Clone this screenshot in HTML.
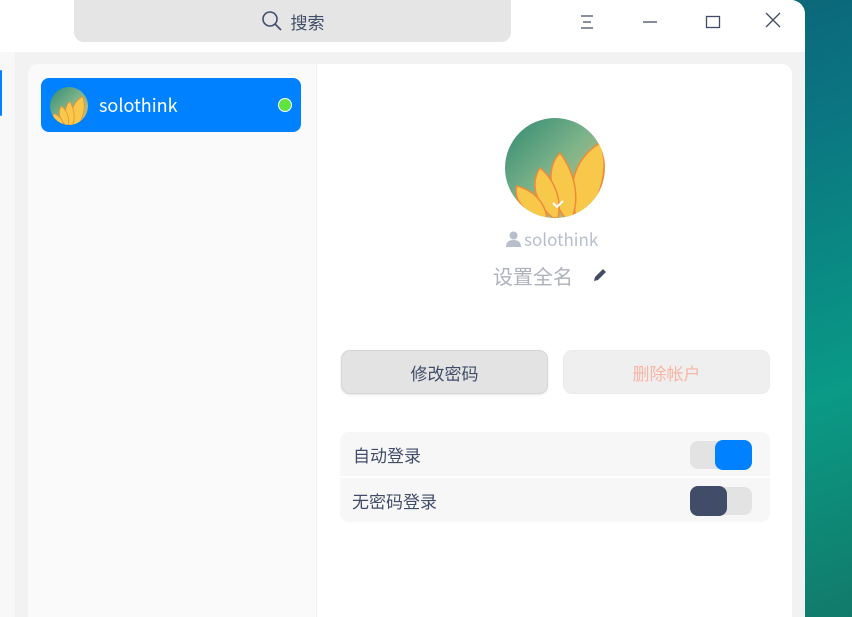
<!DOCTYPE html><html><head><meta charset="utf-8"><style>
body{margin:0;width:852px;height:617px;overflow:hidden;position:relative;font-family:"Noto Sans CJK SC","Liberation Sans",sans-serif;background:linear-gradient(160deg,#0a4a5e 0%,#0b7080 40%,#0a9a86 75%,#127a6a 100%)}
.win{position:absolute;left:0;top:0;width:805px;height:617px;background:#f2f2f2;border-top-right-radius:14px;overflow:hidden}
.hdr{position:absolute;left:0;top:0;width:805px;height:52px;background:#fff}
.search{position:absolute;left:74px;top:0;width:437px;height:42px;background:#e5e5e5;border-radius:0 0 10px 10px;font-size:17px;color:#414d68;display:flex;align-items:center;justify-content:center;gap:8px}
.lp{position:absolute;left:28px;top:64px;width:288px;height:560px;background:#fafafa;border-radius:10px 0 0 0}
.rp{position:absolute;left:317px;top:64px;width:475px;height:560px;background:#fff;border-radius:0 10px 0 0}
.item{position:absolute;left:41px;top:78px;width:260px;height:54px;background:#0081ff;border-radius:8px;color:#fff;font-size:18px}
.av{border-radius:50%;overflow:hidden;background:linear-gradient(135deg,#2f8a72,#7fb48a 50%,#d8c070)}
.btn{position:absolute;top:350px;width:205px;height:42px;border-radius:9px;font-size:17px;display:flex;align-items:center;justify-content:center}
.row{position:absolute;left:340px;width:430px;height:44px;background:#f7f7f7;font-size:17px;color:#414d68}
.sw{position:absolute;left:350px;top:9px;width:62px;height:28px;border-radius:8px;background:#e3e3e3}
.k{position:absolute;top:0;width:37px;height:30px;border-radius:8px}
</style></head><body>
<div class="win">
<div class="hdr">
<div class="search"><svg width="22" height="22" viewBox="0 0 22 22"><circle cx="9" cy="9" r="7" fill="none" stroke="#414d68" stroke-width="1.6"/><line x1="14" y1="14" x2="20" y2="20" stroke="#414d68" stroke-width="1.6"/></svg>搜索</div>
<svg style="position:absolute;left:578px;top:12px" width="20" height="20"><path d="M3 4h12M5 10h8M3 16h12" stroke="#414d68" stroke-width="1.2"/></svg>
<svg style="position:absolute;left:640px;top:12px" width="20" height="20"><path d="M3 10h14" stroke="#414d68" stroke-width="1.3"/></svg>
<svg style="position:absolute;left:703px;top:12px" width="20" height="20"><rect x="3.5" y="4.5" width="13" height="11" fill="none" stroke="#414d68" stroke-width="1.3"/></svg>
<svg style="position:absolute;left:763px;top:10px" width="20" height="20"><path d="M3 3l14 14M17 3L3 17" stroke="#414d68" stroke-width="1.3"/></svg>
</div>
<div style="position:absolute;left:0;top:52px;width:15px;height:565px;background:#f8f8f8"></div>
<div style="position:absolute;left:0;top:70px;width:2px;height:46px;background:#0081ff;border-radius:2px"></div>
<div class="lp"></div>
<div class="rp"></div>
<div class="item"><div class="av" style="position:absolute;left:9px;top:9px;width:38px;height:38px"><svg viewBox="0 0 100 100" width="38" height="38"><g fill="#f7c84a" stroke="#f08a3a" stroke-width="2"><path d="M60 100C50 70 60 40 85 25c10 20 5 50-10 75z"/><path d="M50 100C40 80 35 55 52 38c12 20 15 45 8 62z"/><path d="M40 100C25 85 20 65 30 50c15 12 22 32 18 50z"/><path d="M30 100C10 95 5 80 10 70c15 5 25 17 25 30z"/></g></svg></div><span style="position:absolute;left:58px;top:14px">solothink</span><div style="position:absolute;left:237px;top:20px;width:12px;height:12px;border-radius:50%;background:#5fe43f;border:1px solid #fff"></div></div>
<div class="av" style="position:absolute;left:505px;top:118px;width:100px;height:100px"><svg viewBox="0 0 100 100" width="100" height="100"><g fill="#f7c84a" stroke="#f08a3a" stroke-width="1.5"><path d="M72 100C60 70 70 40 95 25c10 25 0 55-15 75z"/><path d="M60 100C45 80 40 50 55 35c15 20 20 45 12 65z"/><path d="M48 100C30 85 25 65 35 50c15 12 22 32 18 50z"/><path d="M38 100C18 95 8 80 12 68c18 5 28 17 30 32z"/></g><path d="M48 85l4 4 6-6" stroke="#fff" stroke-width="2" fill="none"/></svg></div>
<div style="position:absolute;left:506px;top:226px;font-size:17px;color:#b8bfcc;display:flex;align-items:center;gap:3px"><svg width="15" height="16"><circle cx="7.5" cy="4.5" r="4" fill="#b8bfcc"/><path d="M0 16c0-5 3-7 7.5-7S15 11 15 16z" fill="#b8bfcc"/></svg>solothink</div>
<div style="position:absolute;left:493px;top:261px;font-size:20px;color:#aeb2bb">设置全名</div>
<svg style="position:absolute;left:592px;top:267px" width="16" height="16"><path d="M2 14l1-4 8-8 3 3-8 8z" fill="#414d68"/></svg>
<div class="btn" style="left:341px;background:#e3e3e3;color:#414d68;border:1px solid #d6d6d6;box-shadow:0 1px 2px rgba(0,0,0,.1)">修改密码</div>
<div class="btn" style="left:563px;background:#efefef;color:#f8b5a4;border:1px solid #ebebeb">删除帐户</div>
<div class="row" style="top:432px;border-radius:9px 9px 0 0"><span style="position:absolute;left:13px;top:10px">自动登录</span><div class="sw"><div class="k" style="left:25px;top:-1px;background:#0081ff"></div></div></div>
<div class="row" style="top:478px;border-radius:0 0 9px 9px"><span style="position:absolute;left:12px;top:10px">无密码登录</span><div class="sw"><div class="k" style="left:0;top:-1px;background:#414d68"></div></div></div>
</div>
</body></html>
